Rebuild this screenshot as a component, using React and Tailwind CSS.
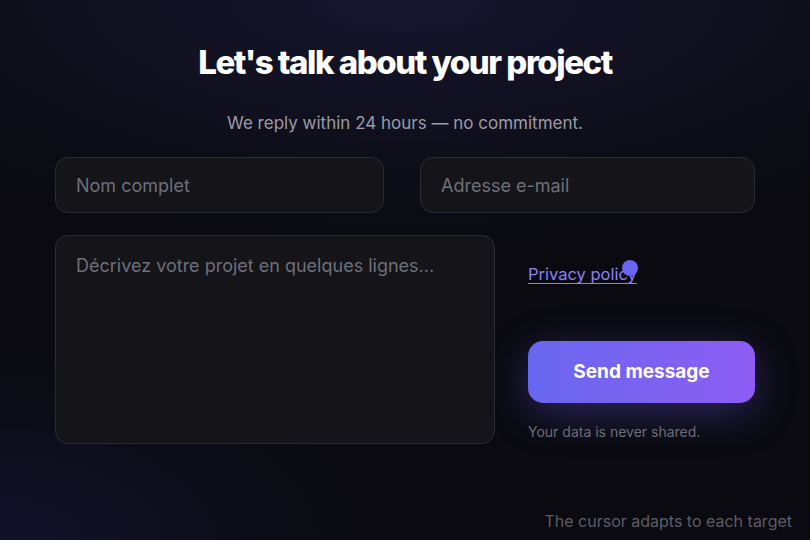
export default function App() {
  return (
    <div
      className="relative w-[810px] h-[540px] overflow-hidden bg-[#0a0a10] text-white"
      style={{ fontFamily: "Inter, 'Noto Sans', sans-serif" }}
    >
      {/* background glows */}
      <div className="absolute inset-0 bg-[radial-gradient(ellipse_80%_45%_at_50%_0%,#16162e_0%,rgba(10,10,16,0)_100%)]" />
      <div className="absolute inset-0 bg-[radial-gradient(ellipse_45%_35%_at_0%_100%,#12122a_0%,rgba(10,10,16,0)_100%)]" />

      <div className="relative w-[700px] mx-auto pt-[42px]">
        <h1 className="text-center text-[33px] leading-[40px] font-extrabold tracking-[-0.045em]">
          Let's talk about your project
        </h1>
        <p className="mt-[29px] text-center text-[17px] leading-[24px] text-[#9b9ba5]">
          We reply within 24 hours — no commitment.
        </p>

        <div className="mt-[22px] flex justify-between">
          <input
            placeholder="Nom complet"
            className="w-[329px] h-[56px] rounded-[13px] border border-[#2b2b33] bg-[#141419] px-[20px] text-[18px] text-white placeholder:text-[#6f6f79] outline-none"
          />
          <input
            placeholder="Adresse e-mail"
            className="w-[335px] h-[56px] rounded-[13px] border border-[#2b2b33] bg-[#141419] px-[20px] text-[18px] text-white placeholder:text-[#6f6f79] outline-none"
          />
        </div>

        <div className="mt-[22px] flex justify-between">
          <textarea
            placeholder="Décrivez votre projet en quelques lignes..."
            className="w-[440px] h-[209px] resize-none rounded-[13px] border border-[#2b2b33] bg-[#141419] px-[20px] py-[18px] text-[18px] leading-[24px] text-white placeholder:text-[#6f6f79] outline-none"
          />
          <div className="w-[227px] flex flex-col pt-[27px]">
            <div className="relative">
              <a className="text-[16.5px] leading-[24px] text-[#8c80f8] underline underline-offset-[3px]">
                Privacy policy
              </a>
              <span className="absolute left-[94px] top-[-2px] w-[16px] h-[16px] rounded-full bg-[#6b63f2] blur-[0.5px]" />
            </div>
            <button className="mt-[55px] h-[62px] w-[227px] rounded-[15px] bg-gradient-to-r from-[#6767ef] to-[#8d5cf4] text-[19px] font-bold text-white shadow-[0_10px_40px_rgba(110,90,240,0.35)]">
              Send message
            </button>
            <p className="mt-[20px] text-[14px] leading-[18px] text-[#6d6d77]">
              Your data is never shared.
            </p>
          </div>
        </div>
      </div>

      <p className="absolute right-[18px] bottom-[8px] text-[16px] leading-[22px] text-[#5d5d67]">
        The cursor adapts to each target
      </p>
    </div>
  );
}
